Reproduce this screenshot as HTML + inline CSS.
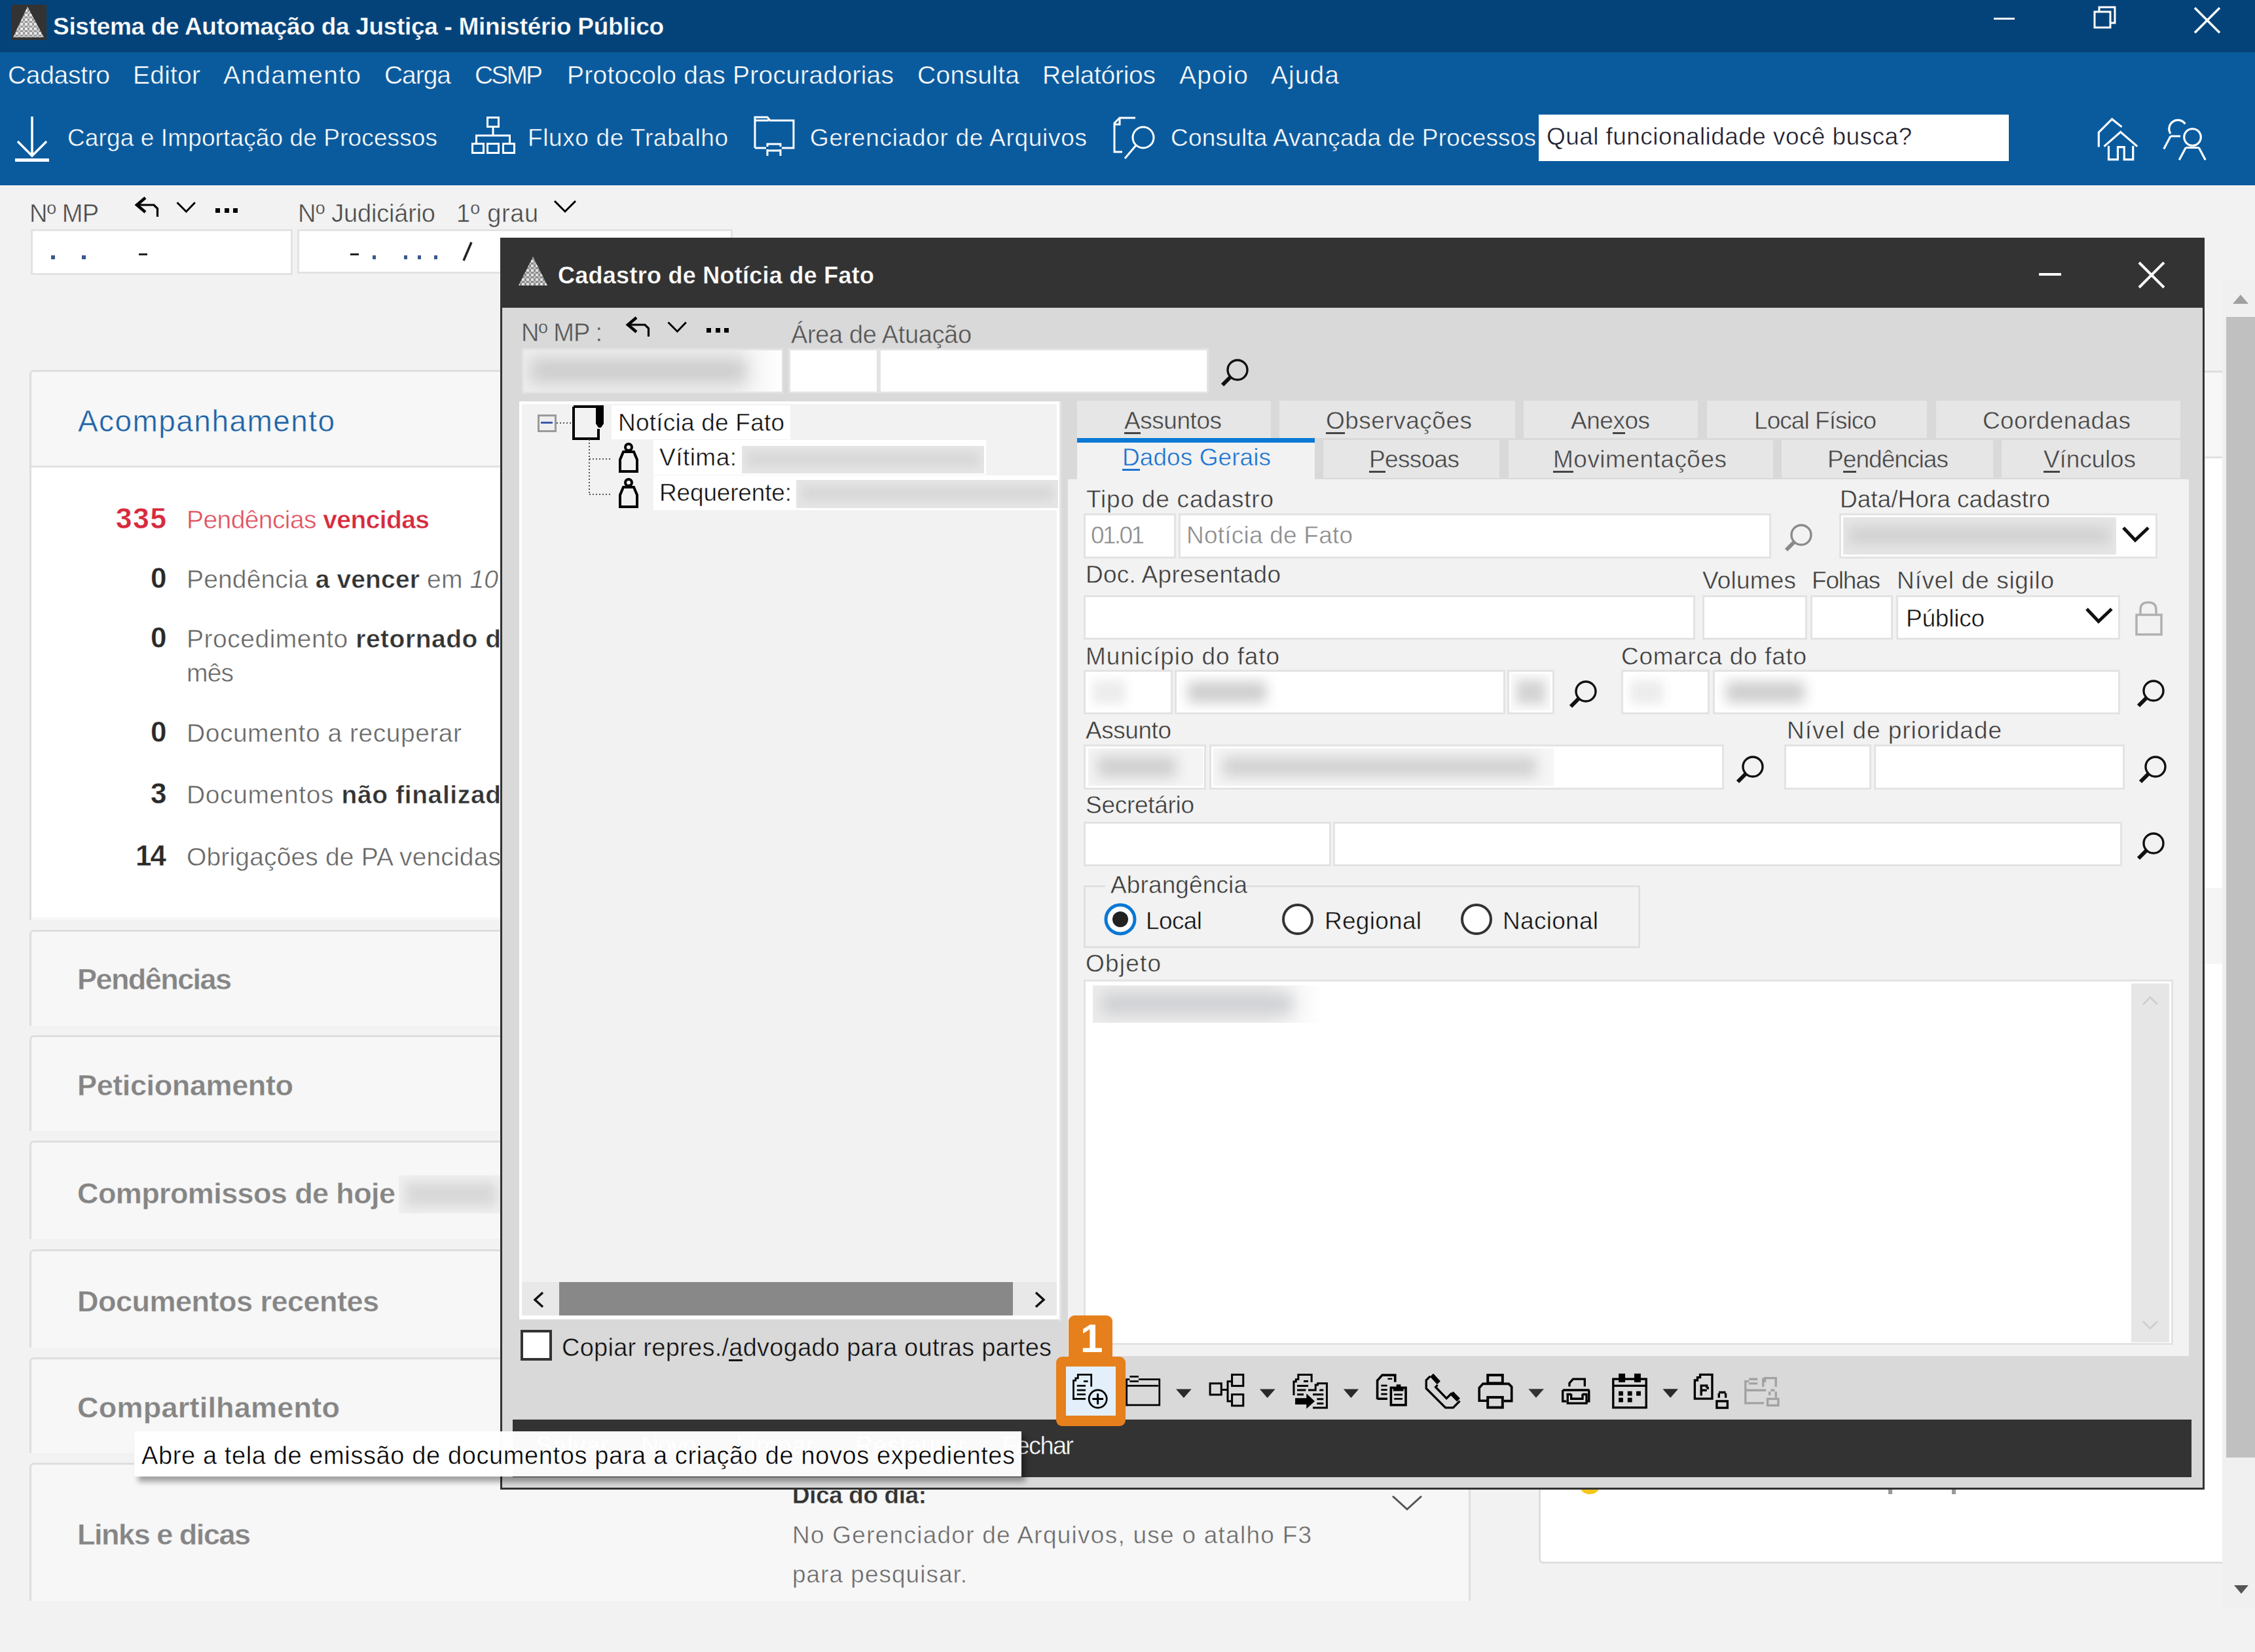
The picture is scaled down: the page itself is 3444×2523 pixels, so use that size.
<!DOCTYPE html><html><head><meta charset="utf-8"><style>
html,body{margin:0;padding:0;width:3444px;height:2523px;overflow:hidden;background:#f2f2f2;}
body{position:relative;font-family:"Liberation Sans",sans-serif;}
.a{position:absolute;}
.t{white-space:pre;}
</style></head><body>
<div class="a" style="left:0px;top:0px;width:3444px;height:80px;background:#04437a;"></div>
<div class="a" style="left:0px;top:80px;width:3444px;height:203px;background:#0a5b9e;"></div>
<div class="a" style="left:17px;top:7px;width:54px;height:54px;background:#333;"></div>
<svg class="a" style="left:17px;top:7px;" width="54" height="53" viewBox="0 0 54 53"><defs><pattern id="pt1" width="7" height="7" patternUnits="userSpaceOnUse"><rect width="7" height="7" fill="#9a9a9a"/><rect width="4" height="4" fill="#e8e8e8"/><rect x="4" y="4" width="3" height="3" fill="#cfcfcf"/></pattern></defs><path d="M25 3 L50 50 L3 50 Z" fill="url(#pt1)"/></svg>
<div class="a t" style="left:81px;top:21.68px;font-size:37px;line-height:37px;color:#fff;font-weight:bold;letter-spacing:-0.303px;-webkit-text-stroke:0.35px #04437a;">Sistema de Automação da Justiça - Ministério Público</div>
<div class="a" style="left:3045px;top:27px;width:32px;height:3px;background:#fff;"></div>
<svg class="a" style="left:3195px;top:8px;" width="42" height="40" viewBox="0 0 42 40"><rect x="4" y="10" width="24" height="24" fill="none" stroke="#fff" stroke-width="3"/><path d="M11 10 V3 H35 V27 H28" fill="none" stroke="#fff" stroke-width="3"/></svg>
<svg class="a" style="left:3349px;top:9px;" width="44" height="44" viewBox="0 0 44 44"><path d="M3 3 L41 41 M41 3 L3 41" stroke="#fff" stroke-width="3.5"/></svg>
<div class="a t" style="left:12px;top:94.99px;font-size:39px;line-height:39px;color:#fff;letter-spacing:-0.319px;-webkit-text-stroke:0.50px #0a5b9e;">Cadastro</div>
<div class="a t" style="left:203px;top:94.99px;font-size:39px;line-height:39px;color:#fff;letter-spacing:0.225px;-webkit-text-stroke:0.50px #0a5b9e;">Editor</div>
<div class="a t" style="left:341px;top:94.99px;font-size:39px;line-height:39px;color:#fff;letter-spacing:1.317px;-webkit-text-stroke:0.50px #0a5b9e;">Andamento</div>
<div class="a t" style="left:587px;top:94.99px;font-size:39px;line-height:39px;color:#fff;letter-spacing:-1.054px;-webkit-text-stroke:0.50px #0a5b9e;">Carga</div>
<div class="a t" style="left:725px;top:94.99px;font-size:39px;line-height:39px;color:#fff;letter-spacing:-2.893px;-webkit-text-stroke:0.50px #0a5b9e;">CSMP</div>
<div class="a t" style="left:866px;top:94.99px;font-size:39px;line-height:39px;color:#fff;letter-spacing:0.267px;-webkit-text-stroke:0.50px #0a5b9e;">Protocolo das Procuradorias</div>
<div class="a t" style="left:1401px;top:94.99px;font-size:39px;line-height:39px;color:#fff;letter-spacing:0.298px;-webkit-text-stroke:0.50px #0a5b9e;">Consulta</div>
<div class="a t" style="left:1592px;top:94.99px;font-size:39px;line-height:39px;color:#fff;letter-spacing:-0.285px;-webkit-text-stroke:0.50px #0a5b9e;">Relatórios</div>
<div class="a t" style="left:1801px;top:94.99px;font-size:39px;line-height:39px;color:#fff;letter-spacing:1.314px;-webkit-text-stroke:0.50px #0a5b9e;">Apoio</div>
<div class="a t" style="left:1941px;top:94.99px;font-size:39px;line-height:39px;color:#fff;letter-spacing:1.064px;-webkit-text-stroke:0.50px #0a5b9e;">Ajuda</div>
<svg class="a" style="left:22px;top:176px;" width="54" height="72" viewBox="0 0 54 72"><path d="M27 2 V62 M5 40 L27 62 L49 40" fill="none" stroke="#fff" stroke-width="3.5"/><rect x="1" y="66" width="52" height="5" fill="#fff"/></svg>
<div class="a t" style="left:103px;top:191.68px;font-size:37px;line-height:37px;color:#fff;letter-spacing:0.120px;-webkit-text-stroke:0.50px #0a5b9e;">Carga e Importação de Processos</div>
<svg class="a" style="left:718px;top:176px;" width="72" height="64" viewBox="0 0 72 64"><g fill="none" stroke="#fff" stroke-width="3"><rect x="26.5" y="3.5" width="17" height="14"/><path d="M35 17 V31 M9.5 31 H60.5 M9.5 29.5 V42 M60.5 29.5 V42"/><rect x="3.5" y="43.5" width="17" height="14"/><rect x="26.5" y="43.5" width="17" height="14"/><rect x="50.5" y="43.5" width="17" height="14"/></g></svg>
<div class="a t" style="left:806px;top:191.68px;font-size:37px;line-height:37px;color:#fff;letter-spacing:0.615px;-webkit-text-stroke:0.50px #0a5b9e;">Fluxo de Trabalho</div>
<svg class="a" style="left:1150px;top:176px;" width="66" height="66" viewBox="0 0 66 66"><g fill="none" stroke="#fff" stroke-width="3"><path d="M3 50 V3 H22 L26 8 H62 V50 H3 M3 8 H24"/><path d="M22 62 V44 H42 V62 M22 54 H42" /></g><rect x="20" y="48" width="24" height="4" fill="#0a5b9e"/><path d="M22 62 V44 H42 V62" fill="none" stroke="#fff" stroke-width="3" transform="translate(1150 176)"/></svg>
<div class="a t" style="left:1237px;top:191.68px;font-size:37px;line-height:37px;color:#fff;letter-spacing:0.718px;-webkit-text-stroke:0.50px #0a5b9e;">Gerenciador de Arquivos</div>
<svg class="a" style="left:1698px;top:176px;" width="76" height="70" viewBox="0 0 76 70"><g fill="none" stroke="#fff" stroke-width="3"><path d="M16 56 H4 V12 L12 4 H36"/><path d="M4 14 H12 V4"/><circle cx="48" cy="34" r="16"/><path d="M37 46 L20 66"/></g></svg>
<div class="a t" style="left:1788px;top:191.68px;font-size:37px;line-height:37px;color:#fff;letter-spacing:0.187px;-webkit-text-stroke:0.50px #0a5b9e;">Consulta Avançada de Processos</div>
<div class="a" style="left:2350px;top:175px;width:718px;height:71px;background:#fff;"></div>
<div class="a t" style="left:2362px;top:189.68px;font-size:37px;line-height:37px;color:#1a1a2a;letter-spacing:0.431px;-webkit-text-stroke:0.50px #ffffff;">Qual funcionalidade você busca?</div>
<svg class="a" style="left:3180px;top:165px;" width="210" height="95" viewBox="0 0 210 95"><g transform="scale(0.09311)" fill="none" stroke="#fff" stroke-width="34"><path d="M272 640 V400 L490 182 L650 310"/><path d="M360 630 L630 392 L905 630"/><path d="M435 620 V845 H585 V640 H690 V845 H835 V620"/><path d="M1690 262 A135 135 0 1 0 1450 420"/><path d="M1450 462 H1612 M1450 462 L1340 672"/><circle cx="1810" cy="478" r="137"/><path d="M1700 650 H1915 M1700 650 L1592 850 M1915 650 L2022 850"/></g></svg>
<div class="a t" style="left:45px;top:306.83px;font-size:38px;line-height:38px;color:#4a4a4a;letter-spacing:-0.720px;-webkit-text-stroke:0.50px #f2f2f2;">Nº MP</div>
<svg class="a" style="left:200px;top:297px;" width="50" height="40" viewBox="0 0 50 40"><g fill="none" stroke="#000"><path d="M22 5 L9 16 L22 27" stroke-width="4.5"/><path d="M9 16 H35 L40.5 21.5 V34" stroke-width="3.2"/></g></svg>
<svg class="a" style="left:265px;top:305px;" width="38" height="24" viewBox="0 0 38 24"><path d="M5.5 4.3 L19.4 18.2 L32.8 4.3" fill="none" stroke="#000" stroke-width="3"/></svg>
<div class="a" style="left:329px;top:318px;width:7px;height:7px;background:#000;"></div>
<div class="a" style="left:343px;top:318px;width:7px;height:7px;background:#000;"></div>
<div class="a" style="left:356px;top:318px;width:7px;height:7px;background:#000;"></div>
<div class="a t" style="left:455px;top:306.83px;font-size:38px;line-height:38px;color:#4a4a4a;letter-spacing:-0.199px;-webkit-text-stroke:0.50px #f2f2f2;">Nº Judiciário</div>
<div class="a t" style="left:697px;top:306.83px;font-size:38px;line-height:38px;color:#4a4a4a;letter-spacing:0.564px;-webkit-text-stroke:0.50px #f2f2f2;">1º grau</div>
<svg class="a" style="left:845px;top:304px;" width="36" height="22" viewBox="0 0 36 22"><path d="M2 3 L18 19 L34 3" fill="none" stroke="#000" stroke-width="3"/></svg>
<div class="a" style="left:47px;top:350px;width:394px;height:64px;background:#fff;border:3px solid #e3e3e3;"></div>
<div class="a" style="left:454px;top:350px;width:659px;height:62px;background:#fff;border:3px solid #e3e3e3;"></div>
<div class="a" style="left:78px;top:390px;width:6px;height:6px;background:#3a5a8a;"></div>
<div class="a" style="left:125px;top:390px;width:6px;height:6px;background:#3a5a8a;"></div>
<div class="a" style="left:212px;top:387px;width:13px;height:3px;background:#222;"></div>
<div class="a" style="left:535px;top:387px;width:13px;height:3px;background:#222;"></div>
<div class="a" style="left:569px;top:390px;width:5px;height:6px;background:#3a5a8a;"></div>
<div class="a" style="left:617px;top:390px;width:5px;height:6px;background:#3a5a8a;"></div>
<div class="a" style="left:638px;top:390px;width:5px;height:6px;background:#3a5a8a;"></div>
<div class="a" style="left:663px;top:390px;width:5px;height:6px;background:#3a5a8a;"></div>
<svg class="a" style="left:704px;top:368px;" width="20" height="32" viewBox="0 0 20 32"><path d="M16 2 L4 30" stroke="#222" stroke-width="3.5"/></svg>
<div class="a" style="left:45px;top:565px;width:2195px;height:837px;background:#f7f7f7;border:3px solid #dedede;border-bottom:none;border-radius:7px 7px 0 0;"></div>
<div class="a" style="left:48px;top:714px;width:2195px;height:687px;background:#fff;"></div>
<div class="a" style="left:48px;top:711px;width:2195px;height:3px;background:#e2e2e2;"></div>
<div class="a t" style="left:119px;top:620.06px;font-size:46px;line-height:46px;color:#1f64a6;letter-spacing:1.437px;-webkit-text-stroke:0.50px #f7f7f7;">Acompanhamento</div>
<div class="a t" style="left:177px;top:769.75px;font-size:44px;line-height:44px;color:#d62a3d;font-weight:bold;letter-spacing:1.798px;-webkit-text-stroke:0.35px #ffffff;">335</div>
<div class="a t" style="left:285px;top:773.99px;font-size:39px;line-height:39px;letter-spacing:-0.586px;-webkit-text-stroke:0.50px #ffffff;"><span style="color:#e0505e;">Pendências </span><span style="color:#d62a3d;font-weight:bold;">vencidas</span></div>
<div class="a t" style="left:230px;top:860.75px;font-size:44px;line-height:44px;color:#2a2a2a;font-weight:bold;-webkit-text-stroke:0.35px #ffffff;">0</div>
<div class="a t" style="left:285px;top:864.99px;font-size:39px;line-height:39px;letter-spacing:0.146px;-webkit-text-stroke:0.50px #ffffff;"><span style="color:#666;">Pendência </span><span style="color:#333;font-weight:bold;">a vencer</span><span style="color:#666;"> em </span><span style="color:#666;font-style:italic;">10</span></div>
<div class="a t" style="left:230px;top:951.75px;font-size:44px;line-height:44px;color:#2a2a2a;font-weight:bold;-webkit-text-stroke:0.35px #ffffff;">0</div>
<div class="a t" style="left:285px;top:955.99px;font-size:39px;line-height:39px;letter-spacing:0.517px;-webkit-text-stroke:0.50px #ffffff;"><span style="color:#666;">Procedimento </span><span style="color:#333;font-weight:bold;">retornado d</span></div>
<div class="a t" style="left:285px;top:1007.99px;font-size:39px;line-height:39px;color:#666;letter-spacing:-0.837px;-webkit-text-stroke:0.50px #ffffff;">mês</div>
<div class="a t" style="left:230px;top:1095.75px;font-size:44px;line-height:44px;color:#2a2a2a;font-weight:bold;-webkit-text-stroke:0.35px #ffffff;">0</div>
<div class="a t" style="left:285px;top:1099.99px;font-size:39px;line-height:39px;color:#666;letter-spacing:0.516px;-webkit-text-stroke:0.50px #ffffff;">Documento a recuperar</div>
<div class="a t" style="left:230px;top:1189.75px;font-size:44px;line-height:44px;color:#2a2a2a;font-weight:bold;-webkit-text-stroke:0.35px #ffffff;">3</div>
<div class="a t" style="left:285px;top:1193.99px;font-size:39px;line-height:39px;letter-spacing:0.612px;-webkit-text-stroke:0.50px #ffffff;"><span style="color:#666;">Documentos </span><span style="color:#333;font-weight:bold;">não finalizad</span></div>
<div class="a t" style="left:207px;top:1284.75px;font-size:44px;line-height:44px;color:#2a2a2a;font-weight:bold;letter-spacing:-1.936px;-webkit-text-stroke:0.35px #ffffff;">14</div>
<div class="a t" style="left:285px;top:1288.99px;font-size:39px;line-height:39px;color:#666;letter-spacing:0.158px;-webkit-text-stroke:0.50px #ffffff;">Obrigações de PA vencidas</div>
<div class="a" style="left:45px;top:1420px;width:2195px;height:144px;background:#f7f7f7;border:3px solid #dedede;border-bottom:none;border-radius:7px 7px 0 0;"></div>
<div class="a t" style="left:118px;top:1472.91px;font-size:45px;line-height:45px;color:#858585;font-weight:bold;letter-spacing:-1.566px;-webkit-text-stroke:0.35px #f7f7f7;">Pendências</div>
<div class="a" style="left:45px;top:1581px;width:2195px;height:143px;background:#f7f7f7;border:3px solid #dedede;border-bottom:none;border-radius:7px 7px 0 0;"></div>
<div class="a t" style="left:118px;top:1634.91px;font-size:45px;line-height:45px;color:#858585;font-weight:bold;letter-spacing:-0.388px;-webkit-text-stroke:0.35px #f7f7f7;">Peticionamento</div>
<div class="a" style="left:45px;top:1742px;width:2195px;height:147px;background:#f7f7f7;border:3px solid #dedede;border-bottom:none;border-radius:7px 7px 0 0;"></div>
<div class="a t" style="left:118px;top:1799.91px;font-size:45px;line-height:45px;color:#858585;font-weight:bold;letter-spacing:-0.609px;-webkit-text-stroke:0.35px #f7f7f7;">Compromissos de hoje</div>
<div class="a" style="left:45px;top:1908px;width:2195px;height:147px;background:#f7f7f7;border:3px solid #dedede;border-bottom:none;border-radius:7px 7px 0 0;"></div>
<div class="a t" style="left:118px;top:1964.91px;font-size:45px;line-height:45px;color:#858585;font-weight:bold;letter-spacing:-0.506px;-webkit-text-stroke:0.35px #f7f7f7;">Documentos recentes</div>
<div class="a" style="left:45px;top:2073px;width:2195px;height:143px;background:#f7f7f7;border:3px solid #dedede;border-bottom:none;border-radius:7px 7px 0 0;"></div>
<div class="a t" style="left:118px;top:2126.91px;font-size:45px;line-height:45px;color:#858585;font-weight:bold;letter-spacing:0.233px;-webkit-text-stroke:0.35px #f7f7f7;">Compartilhamento</div>
<div class="a" style="left:45px;top:2234px;width:2195px;height:208px;background:#f7f7f7;border:3px solid #dedede;border-bottom:none;border-radius:7px 7px 0 0;"></div>
<div class="a t" style="left:118px;top:2320.91px;font-size:45px;line-height:45px;color:#858585;font-weight:bold;letter-spacing:-1.467px;-webkit-text-stroke:0.35px #f7f7f7;">Links e dicas</div>
<div class="a" style="left:609px;top:1795px;width:155px;height:58px;background:#f0f0f0;overflow:hidden;"><div class="a" style="left:10px;top:10px;width:140px;height:38px;background:#d8d8d8;filter:blur(9px);"></div></div>
<div class="a t" style="left:1210px;top:2264.68px;font-size:37px;line-height:37px;color:#333;font-weight:bold;letter-spacing:-0.425px;-webkit-text-stroke:0.35px #f7f7f7;">Dica do dia:</div>
<svg class="a" style="left:2124px;top:2282px;" width="50" height="26" viewBox="0 0 50 26"><path d="M3 3 L25 23 L47 3" fill="none" stroke="#555" stroke-width="3"/></svg>
<div class="a t" style="left:1210px;top:2325.68px;font-size:37px;line-height:37px;color:#6a6a6a;letter-spacing:1.253px;-webkit-text-stroke:0.50px #f7f7f7;">No Gerenciador de Arquivos, use o atalho F3</div>
<div class="a t" style="left:1210px;top:2385.68px;font-size:37px;line-height:37px;color:#6a6a6a;letter-spacing:1.001px;-webkit-text-stroke:0.50px #f7f7f7;">para pesquisar.</div>
<div class="a" style="left:2350px;top:566px;width:1044px;height:1816px;background:#fff;border:3px solid #dedede;border-radius:7px;"></div>
<div class="a" style="left:2353px;top:569px;width:1044px;height:128px;background:#f7f7f7;"></div>
<div class="a" style="left:2353px;top:697px;width:1044px;height:3px;background:#e2e2e2;"></div>
<div class="a" style="left:3367px;top:1356px;width:27px;height:116px;background:#f5f5f5;"></div>
<div class="a" style="left:3394px;top:427px;width:50px;height:2030px;background:#f0f0f0;"></div>
<div class="a" style="left:3400px;top:484px;width:44px;height:1742px;background:#c0c0c0;"></div>
<svg class="a" style="left:3408px;top:448px;" width="28" height="18" viewBox="0 0 28 18"><path d="M14 2 L26 16 L2 16 Z" fill="#a0a0a0"/></svg>
<svg class="a" style="left:3410px;top:2419px;" width="26" height="18" viewBox="0 0 26 18"><path d="M2 2 L24 2 L13 15 Z" fill="#555"/></svg>
<svg class="a" style="left:2413px;top:2268px;" width="30" height="16" viewBox="0 0 30 16"><ellipse cx="15" cy="4" rx="14" ry="10" fill="#f5c518"/></svg>
<div class="a" style="left:2884px;top:2275px;width:6px;height:7px;background:#999;"></div>
<div class="a" style="left:2981px;top:2275px;width:6px;height:7px;background:#999;"></div>
<div class="a" style="left:764px;top:363px;width:2603px;height:1912px;background:#333;"></div>
<div class="a" style="left:767px;top:470px;width:2597px;height:1802px;background:#d9d9d9;"></div>
<svg class="a" style="left:790px;top:390px;" width="48" height="48" viewBox="0 0 48 48"><defs><pattern id="pt2" width="7" height="7" patternUnits="userSpaceOnUse"><rect width="7" height="7" fill="#8a8a8a"/><rect width="4" height="4" fill="#e0e0e0"/><rect x="4" y="4" width="3" height="3" fill="#c4c4c4"/></pattern></defs><path d="M24 2 L46 46 L2 46 Z" fill="url(#pt2)"/></svg>
<div class="a t" style="left:852px;top:402.53px;font-size:36px;line-height:36px;color:#fff;font-weight:bold;letter-spacing:0.267px;-webkit-text-stroke:0.35px #333333;">Cadastro de Notícia de Fato</div>
<div class="a" style="left:3114px;top:417px;width:34px;height:4px;background:#fff;"></div>
<svg class="a" style="left:3264px;top:398px;" width="44" height="44" viewBox="0 0 44 44"><path d="M3 3 L41 41 M41 3 L3 41" stroke="#fff" stroke-width="4"/></svg>
<div class="a t" style="left:796px;top:488.83px;font-size:38px;line-height:38px;color:#555;letter-spacing:-0.884px;-webkit-text-stroke:0.50px #d9d9d9;">Nº MP :</div>
<svg class="a" style="left:950px;top:480px;" width="50" height="40" viewBox="0 0 50 40"><g fill="none" stroke="#000"><path d="M22 5 L9 16 L22 27" stroke-width="4.5"/><path d="M9 16 H35 L40.5 21.5 V34" stroke-width="3.2"/></g></svg>
<svg class="a" style="left:1015px;top:488px;" width="38" height="24" viewBox="0 0 38 24"><path d="M5.5 4.3 L19.4 18.2 L32.8 4.3" fill="none" stroke="#000" stroke-width="3"/></svg>
<div class="a" style="left:1079px;top:501px;width:7px;height:7px;background:#000;"></div>
<div class="a" style="left:1093px;top:501px;width:7px;height:7px;background:#000;"></div>
<div class="a" style="left:1106px;top:501px;width:7px;height:7px;background:#000;"></div>
<div class="a t" style="left:1208px;top:491.83px;font-size:38px;line-height:38px;color:#555;letter-spacing:-0.355px;-webkit-text-stroke:0.50px #d9d9d9;">Área de Atuação</div>
<div class="a" style="left:797px;top:532px;width:393px;height:63px;background:#fff;border:3px solid #e3e3e3;"></div>
<div class="a" style="left:800px;top:535px;width:394px;height:63px;background:linear-gradient(to right,#eeeeee 80%,#ffffff);overflow:hidden;"><div class="a" style="left:10px;top:12px;width:330px;height:38px;background:#cdcdcd;filter:blur(12px);"></div></div>
<div class="a" style="left:1204px;top:532px;width:132px;height:63px;background:#fff;border:3px solid #e3e3e3;"></div>
<div class="a" style="left:1342px;top:532px;width:498px;height:63px;background:#fff;border:3px solid #e3e3e3;"></div>
<div class="a" style="left:793px;top:613px;width:817px;height:1392px;background:#f2f2f2;border:4px solid #fff;border-bottom-width:6px;"></div>
<div class="a" style="left:1618px;top:613px;width:3px;height:1406px;background:#e4e4e4;"></div>
<div class="a" style="left:821px;top:633px;width:23px;height:21px;border:3px solid #9a9a9a;background:#eee;"></div>
<div class="a" style="left:826px;top:644px;width:18px;height:3px;background:#3b5bb0;"></div>
<svg class="a" style="left:850px;top:644px;" width="24" height="4" viewBox="0 0 24 4"><path d="M0 2 H24" stroke="#555" stroke-width="2" stroke-dasharray="2 3"/></svg>
<div class="a" style="left:934px;top:619px;width:273px;height:52px;background:#fff;"></div>
<svg class="a" style="left:874px;top:619px;" width="48" height="53" viewBox="0 0 48 53"><path d="M2 2 H36 M2 2 V51 H40 V36" fill="none" stroke="#000" stroke-width="4"/><path d="M36 0 H48 V28 L44 34 H40 L36 28 Z" fill="#000"/></svg>
<div class="a t" style="left:944px;top:626.68px;font-size:37px;line-height:37px;color:#111;letter-spacing:0.222px;-webkit-text-stroke:0.50px #ffffff;">Notícia de Fato</div>
<svg class="a" style="left:898px;top:671px;" width="40" height="90" viewBox="0 0 40 90"><path d="M2 0 V84 M2 30 H36 M2 84 H36" fill="none" stroke="#555" stroke-width="2" stroke-dasharray="2 3"/></svg>
<div class="a" style="left:998px;top:672px;width:508px;height:53px;background:#fff;"></div>
<div class="a" style="left:998px;top:726px;width:618px;height:53px;background:#fff;"></div>
<svg class="a" style="left:944px;top:676px;" width="32" height="46" viewBox="0 0 32 46"><g fill="none" stroke="#000" stroke-width="4"><circle cx="16" cy="7" r="5"/><path d="M8 14 H24 L29 26 V44 H3 V26 Z"/></g></svg>
<svg class="a" style="left:944px;top:730px;" width="32" height="46" viewBox="0 0 32 46"><g fill="none" stroke="#000" stroke-width="4"><circle cx="16" cy="7" r="5"/><path d="M8 14 H24 L29 26 V44 H3 V26 Z"/></g></svg>
<div class="a t" style="left:1007px;top:679.68px;font-size:37px;line-height:37px;color:#111;letter-spacing:0.478px;-webkit-text-stroke:0.50px #ffffff;">Vítima:</div>
<div class="a t" style="left:1007px;top:733.68px;font-size:37px;line-height:37px;color:#111;letter-spacing:-0.163px;-webkit-text-stroke:0.50px #ffffff;">Requerente:</div>
<div class="a" style="left:1133px;top:681px;width:370px;height:42px;background:#e6e6e6;overflow:hidden;"><div class="a" style="left:8px;top:10px;width:354px;height:21px;background:#d6d6d6;filter:blur(8px);"></div></div>
<div class="a" style="left:1216px;top:733px;width:400px;height:43px;background:#e6e6e6;overflow:hidden;"><div class="a" style="left:8px;top:10px;width:384px;height:21px;background:#d6d6d6;filter:blur(8px);"></div></div>
<div class="a" style="left:797px;top:1958px;width:817px;height:51px;background:#e8e8e8;"></div>
<div class="a" style="left:854px;top:1958px;width:693px;height:51px;background:#888;"></div>
<svg class="a" style="left:814px;top:1972px;" width="18" height="26" viewBox="0 0 18 26"><path d="M15 2 L3 13 L15 24" fill="none" stroke="#111" stroke-width="3.5"/></svg>
<svg class="a" style="left:1579px;top:1972px;" width="18" height="26" viewBox="0 0 18 26"><path d="M3 2 L15 13 L3 24" fill="none" stroke="#111" stroke-width="3.5"/></svg>
<div class="a" style="left:795px;top:2031px;width:40px;height:39px;border:4px solid #333;background:#fff;"></div>
<div class="a" style="left:1113.3px;top:2076px;width:21.1px;height:3px;background:#111;"></div>
<div class="a t" style="left:858px;top:2038.83px;font-size:38px;line-height:38px;color:#111;letter-spacing:0.265px;-webkit-text-stroke:0.50px #d9d9d9;">Copiar repres./advogado para outras partes</div>
<div class="a" style="left:1645px;top:612px;width:296px;height:57px;background:#e6e6e6;"></div>
<div class="a" style="left:1717.0px;top:660px;width:24.7px;height:3px;background:#444;"></div>
<div class="a t" style="left:1717px;top:623.68px;font-size:37px;line-height:37px;color:#444;letter-spacing:-0.455px;-webkit-text-stroke:0.50px #e6e6e6;">Assuntos</div>
<div class="a" style="left:1954px;top:612px;width:360px;height:57px;background:#e6e6e6;"></div>
<div class="a" style="left:2025.0px;top:660px;width:28.8px;height:3px;background:#444;"></div>
<div class="a t" style="left:2025px;top:623.68px;font-size:37px;line-height:37px;color:#444;letter-spacing:0.502px;-webkit-text-stroke:0.50px #e6e6e6;">Observações</div>
<div class="a" style="left:2327px;top:612px;width:266px;height:57px;background:#e6e6e6;"></div>
<div class="a" style="left:2463.4px;top:660px;width:18.5px;height:3px;background:#444;"></div>
<div class="a t" style="left:2399px;top:623.68px;font-size:37px;line-height:37px;color:#444;letter-spacing:-0.481px;-webkit-text-stroke:0.50px #e6e6e6;">Anexos</div>
<div class="a" style="left:2607px;top:612px;width:336px;height:57px;background:#e6e6e6;"></div>
<div class="a t" style="left:2679px;top:623.68px;font-size:37px;line-height:37px;color:#444;letter-spacing:-0.946px;-webkit-text-stroke:0.50px #e6e6e6;">Local Físico</div>
<div class="a" style="left:2957px;top:612px;width:373px;height:57px;background:#e6e6e6;"></div>
<div class="a t" style="left:3028px;top:623.68px;font-size:37px;line-height:37px;color:#444;letter-spacing:0.386px;-webkit-text-stroke:0.50px #e6e6e6;">Coordenadas</div>
<div class="a" style="left:2021px;top:672px;width:269px;height:58px;background:#e6e6e6;"></div>
<div class="a" style="left:2091.0px;top:719px;width:24.7px;height:3px;background:#444;"></div>
<div class="a t" style="left:2091px;top:682.68px;font-size:37px;line-height:37px;color:#444;letter-spacing:-0.651px;-webkit-text-stroke:0.50px #e6e6e6;">Pessoas</div>
<div class="a" style="left:2304px;top:672px;width:404px;height:58px;background:#e6e6e6;"></div>
<div class="a" style="left:2372.0px;top:719px;width:30.8px;height:3px;background:#444;"></div>
<div class="a t" style="left:2372px;top:682.68px;font-size:37px;line-height:37px;color:#444;letter-spacing:0.492px;-webkit-text-stroke:0.50px #e6e6e6;">Movimentações</div>
<div class="a" style="left:2721px;top:672px;width:323px;height:58px;background:#e6e6e6;"></div>
<div class="a" style="left:2814.8px;top:719px;width:20.6px;height:3px;background:#444;"></div>
<div class="a t" style="left:2791px;top:682.68px;font-size:37px;line-height:37px;color:#444;letter-spacing:-0.928px;-webkit-text-stroke:0.50px #e6e6e6;">Pendências</div>
<div class="a" style="left:3057px;top:672px;width:273px;height:58px;background:#e6e6e6;"></div>
<div class="a" style="left:3121.0px;top:719px;width:24.7px;height:3px;background:#444;"></div>
<div class="a t" style="left:3121px;top:682.68px;font-size:37px;line-height:37px;color:#444;letter-spacing:-0.130px;-webkit-text-stroke:0.50px #e6e6e6;">Vínculos</div>
<div class="a" style="left:1645px;top:669px;width:363px;height:7px;background:#0a78d4;"></div>
<div class="a" style="left:1645px;top:676px;width:363px;height:56px;background:#f2f2f2;"></div>
<div class="a" style="left:1714.0px;top:716px;width:26.7px;height:3px;background:#1a73d0;"></div>
<div class="a t" style="left:1714px;top:679.68px;font-size:37px;line-height:37px;color:#1a73d0;letter-spacing:0.073px;-webkit-text-stroke:0.50px #f2f2f2;">Dados Gerais</div>
<div class="a" style="left:1631px;top:732px;width:1712px;height:1339px;background:#f2f2f2;"></div>
<div class="a t" style="left:1659px;top:743.68px;font-size:37px;line-height:37px;color:#3c3c3c;letter-spacing:0.786px;-webkit-text-stroke:0.50px #f2f2f2;">Tipo de cadastro</div>
<div class="a" style="left:1655px;top:784px;width:135px;height:63px;background:#fff;border:3px solid #e3e3e3;"></div>
<div class="a" style="left:1800px;top:784px;width:899px;height:63px;background:#fff;border:3px solid #e3e3e3;"></div>
<div class="a t" style="left:1666px;top:798.68px;font-size:37px;line-height:37px;color:#8a8a8a;letter-spacing:-2.645px;-webkit-text-stroke:0.50px #ffffff;">01.01</div>
<div class="a t" style="left:1812px;top:798.68px;font-size:37px;line-height:37px;color:#8a8a8a;letter-spacing:0.222px;-webkit-text-stroke:0.50px #ffffff;">Notícia de Fato</div>
<div class="a t" style="left:2810px;top:743.68px;font-size:37px;line-height:37px;color:#3c3c3c;letter-spacing:0.012px;-webkit-text-stroke:0.50px #f2f2f2;">Data/Hora cadastro</div>
<div class="a" style="left:2809px;top:784px;width:480px;height:63px;background:#fff;border:3px solid #e3e3e3;"></div>
<div class="a" style="left:2815px;top:790px;width:417px;height:57px;background:#e6e6e6;overflow:hidden;"><div class="a" style="left:9px;top:14px;width:399px;height:28px;background:#d2d2d2;filter:blur(9px);"></div></div>
<svg class="a" style="left:3240px;top:801px;" width="46" height="30" viewBox="0 0 46 30"><path d="M3 5 L21 24 L41 5" fill="none" stroke="#111" stroke-width="5"/></svg>
<div class="a t" style="left:1658px;top:858.68px;font-size:37px;line-height:37px;color:#3c3c3c;letter-spacing:0.259px;-webkit-text-stroke:0.50px #f2f2f2;">Doc. Apresentado</div>
<div class="a" style="left:1655px;top:909px;width:928px;height:62px;background:#fff;border:3px solid #e3e3e3;"></div>
<div class="a t" style="left:2600px;top:867.68px;font-size:37px;line-height:37px;color:#3c3c3c;letter-spacing:0.182px;-webkit-text-stroke:0.50px #f2f2f2;">Volumes</div>
<div class="a t" style="left:2767px;top:867.68px;font-size:37px;line-height:37px;color:#3c3c3c;letter-spacing:-1.209px;-webkit-text-stroke:0.50px #f2f2f2;">Folhas</div>
<div class="a t" style="left:2897px;top:867.68px;font-size:37px;line-height:37px;color:#3c3c3c;letter-spacing:0.691px;-webkit-text-stroke:0.50px #f2f2f2;">Nível de sigilo</div>
<div class="a" style="left:2600px;top:909px;width:154px;height:62px;background:#fff;border:3px solid #e3e3e3;"></div>
<div class="a" style="left:2765px;top:909px;width:120px;height:62px;background:#fff;border:3px solid #e3e3e3;"></div>
<div class="a" style="left:2896px;top:909px;width:336px;height:62px;background:#fff;border:3px solid #e3e3e3;"></div>
<div class="a t" style="left:2911px;top:925.68px;font-size:37px;line-height:37px;color:#111;letter-spacing:-0.225px;-webkit-text-stroke:0.50px #ffffff;">Público</div>
<svg class="a" style="left:3184px;top:925px;" width="46" height="30" viewBox="0 0 46 30"><path d="M3 5 L21 24 L41 5" fill="none" stroke="#111" stroke-width="5"/></svg>
<svg class="a" style="left:3260px;top:917px;" width="46" height="56" viewBox="0 0 46 56"><g fill="none" stroke="#b0b0b0" stroke-width="3.5"><path d="M9 22 V14 Q9 3 21 3 Q33 3 33 14 V22"/><rect x="3" y="22" width="38" height="30"/></g></svg>
<div class="a t" style="left:1658px;top:983.68px;font-size:37px;line-height:37px;color:#3c3c3c;letter-spacing:0.890px;-webkit-text-stroke:0.50px #f2f2f2;">Município do fato</div>
<div class="a" style="left:1655px;top:1023px;width:130px;height:62px;background:#fff;border:3px solid #e3e3e3;"></div>
<div class="a" style="left:1794px;top:1023px;width:499px;height:62px;background:#fff;border:3px solid #e3e3e3;"></div>
<div class="a" style="left:2302px;top:1023px;width:66px;height:62px;background:#fff;border:3px solid #e3e3e3;"></div>
<div class="a" style="left:1661px;top:1029px;width:124px;height:56px;background:#fff;overflow:hidden;"><div class="a" style="left:8px;top:10px;width:50px;height:36px;background:#ececec;filter:blur(8px);"></div></div>
<div class="a" style="left:1800px;top:1029px;width:165px;height:56px;background:#ffffff;overflow:hidden;"><div class="a" style="left:14px;top:12px;width:120px;height:32px;background:#cdcdcd;filter:blur(10px);"></div></div>
<div class="a" style="left:2308px;top:1029px;width:60px;height:56px;background:#fafafa;overflow:hidden;"><div class="a" style="left:8px;top:10px;width:44px;height:36px;background:#d4d4d4;filter:blur(8px);"></div></div>
<div class="a t" style="left:2476px;top:983.68px;font-size:37px;line-height:37px;color:#3c3c3c;letter-spacing:0.678px;-webkit-text-stroke:0.50px #f2f2f2;">Comarca do fato</div>
<div class="a" style="left:2476px;top:1023px;width:129px;height:62px;background:#fff;border:3px solid #e3e3e3;"></div>
<div class="a" style="left:2616px;top:1023px;width:616px;height:62px;background:#fff;border:3px solid #e3e3e3;"></div>
<div class="a" style="left:2482px;top:1029px;width:123px;height:56px;background:#fff;overflow:hidden;"><div class="a" style="left:8px;top:10px;width:50px;height:36px;background:#ececec;filter:blur(8px);"></div></div>
<div class="a" style="left:2622px;top:1029px;width:165px;height:56px;background:#ffffff;overflow:hidden;"><div class="a" style="left:14px;top:12px;width:120px;height:32px;background:#cdcdcd;filter:blur(10px);"></div></div>
<div class="a t" style="left:1658px;top:1096.68px;font-size:37px;line-height:37px;color:#3c3c3c;letter-spacing:-0.448px;-webkit-text-stroke:0.50px #f2f2f2;">Assunto</div>
<div class="a" style="left:1655px;top:1137px;width:181px;height:63px;background:#fff;border:3px solid #e3e3e3;"></div>
<div class="a" style="left:1847px;top:1137px;width:780px;height:63px;background:#fff;border:3px solid #e3e3e3;"></div>
<div class="a" style="left:1662px;top:1143px;width:175px;height:57px;background:#f4f4f4;overflow:hidden;"><div class="a" style="left:14px;top:12px;width:120px;height:32px;background:#cfcfcf;filter:blur(10px);"></div></div>
<div class="a" style="left:1853px;top:1143px;width:520px;height:57px;background:#f6f6f6;overflow:hidden;"><div class="a" style="left:14px;top:12px;width:480px;height:32px;background:#d2d2d2;filter:blur(10px);"></div></div>
<div class="a t" style="left:2729px;top:1096.68px;font-size:37px;line-height:37px;color:#3c3c3c;letter-spacing:0.970px;-webkit-text-stroke:0.50px #f2f2f2;">Nível de prioridade</div>
<div class="a" style="left:2725px;top:1137px;width:127px;height:63px;background:#fff;border:3px solid #e3e3e3;"></div>
<div class="a" style="left:2862px;top:1137px;width:377px;height:63px;background:#fff;border:3px solid #e3e3e3;"></div>
<div class="a t" style="left:1658px;top:1210.68px;font-size:37px;line-height:37px;color:#3c3c3c;letter-spacing:-0.291px;-webkit-text-stroke:0.50px #f2f2f2;">Secretário</div>
<div class="a" style="left:1655px;top:1255px;width:372px;height:62px;background:#fff;border:3px solid #e3e3e3;"></div>
<div class="a" style="left:2036px;top:1255px;width:1199px;height:62px;background:#fff;border:3px solid #e3e3e3;"></div>
<div class="a" style="left:1655px;top:1352px;width:844px;height:90px;border:3px solid #e0e0e0;"></div>
<div class="a" style="left:1688px;top:1335px;width:200px;height:28px;background:#f2f2f2;"></div>
<div class="a t" style="left:1696px;top:1332.68px;font-size:37px;line-height:37px;color:#3c3c3c;letter-spacing:0.125px;-webkit-text-stroke:0.50px #f2f2f2;">Abrangência</div>
<svg class="a" style="left:1684px;top:1377px;" width="54" height="54" viewBox="0 0 54 54"><circle cx="27" cy="27" r="22" fill="#fff" stroke="#0a78d4" stroke-width="5"/><circle cx="27" cy="27" r="12" fill="#222"/></svg>
<div class="a t" style="left:1750px;top:1387.68px;font-size:37px;line-height:37px;color:#111;letter-spacing:-0.612px;-webkit-text-stroke:0.50px #f2f2f2;">Local</div>
<svg class="a" style="left:1955px;top:1377px;" width="54" height="54" viewBox="0 0 54 54"><circle cx="27" cy="27" r="22" fill="#fff" stroke="#333" stroke-width="4"/></svg>
<div class="a t" style="left:2023px;top:1387.68px;font-size:37px;line-height:37px;color:#111;letter-spacing:0.280px;-webkit-text-stroke:0.50px #f2f2f2;">Regional</div>
<svg class="a" style="left:2228px;top:1377px;" width="54" height="54" viewBox="0 0 54 54"><circle cx="27" cy="27" r="22" fill="#fff" stroke="#333" stroke-width="4"/></svg>
<div class="a t" style="left:2295px;top:1387.68px;font-size:37px;line-height:37px;color:#111;letter-spacing:0.291px;-webkit-text-stroke:0.50px #f2f2f2;">Nacional</div>
<div class="a t" style="left:1658px;top:1452.68px;font-size:37px;line-height:37px;color:#3c3c3c;letter-spacing:1.199px;-webkit-text-stroke:0.50px #f2f2f2;">Objeto</div>
<div class="a" style="left:1655px;top:1496px;width:1658px;height:552px;background:#fff;border:3px solid #e3e3e3;"></div>
<div class="a" style="left:1669px;top:1505px;width:350px;height:57px;background:linear-gradient(to right,#ececec 75%,#ffffff);overflow:hidden;"><div class="a" style="left:14px;top:12px;width:290px;height:32px;background:#cfd0d3;filter:blur(11px);"></div></div>
<div class="a" style="left:3255px;top:1502px;width:58px;height:548px;background:#e6e6e6;"></div>
<svg class="a" style="left:3270px;top:1520px;" width="28" height="16" viewBox="0 0 28 16"><path d="M3 14 L14 3 L25 14" fill="none" stroke="#cfcfcf" stroke-width="3"/></svg>
<svg class="a" style="left:3270px;top:2016px;" width="28" height="16" viewBox="0 0 28 16"><path d="M3 2 L14 13 L25 2" fill="none" stroke="#cfcfcf" stroke-width="3"/></svg>
<svg class="a" style="left:1860px;top:545px;" width="50" height="50" viewBox="0 0 50 50"><g fill="none" stroke="#111"><circle cx="30" cy="20" r="15" stroke-width="3.4"/><path d="M19 31 L7 43" stroke-width="6"/></g></svg>
<svg class="a" style="left:2721px;top:797px;" width="50" height="50" viewBox="0 0 50 50"><g fill="none" stroke="#8a8a8a"><circle cx="30" cy="20" r="15" stroke-width="3.4"/><path d="M19 31 L7 43" stroke-width="6"/></g></svg>
<svg class="a" style="left:2392px;top:1036px;" width="50" height="50" viewBox="0 0 50 50"><g fill="none" stroke="#111"><circle cx="30" cy="20" r="15" stroke-width="3.4"/><path d="M19 31 L7 43" stroke-width="6"/></g></svg>
<svg class="a" style="left:3259px;top:1035px;" width="50" height="50" viewBox="0 0 50 50"><g fill="none" stroke="#111"><circle cx="30" cy="20" r="15" stroke-width="3.4"/><path d="M19 31 L7 43" stroke-width="6"/></g></svg>
<svg class="a" style="left:2647px;top:1151px;" width="50" height="50" viewBox="0 0 50 50"><g fill="none" stroke="#111"><circle cx="30" cy="20" r="15" stroke-width="3.4"/><path d="M19 31 L7 43" stroke-width="6"/></g></svg>
<svg class="a" style="left:3262px;top:1151px;" width="50" height="50" viewBox="0 0 50 50"><g fill="none" stroke="#111"><circle cx="30" cy="20" r="15" stroke-width="3.4"/><path d="M19 31 L7 43" stroke-width="6"/></g></svg>
<svg class="a" style="left:3259px;top:1268px;" width="50" height="50" viewBox="0 0 50 50"><g fill="none" stroke="#111"><circle cx="30" cy="20" r="15" stroke-width="3.4"/><path d="M19 31 L7 43" stroke-width="6"/></g></svg>
<svg class="a" style="left:2090px;top:2085px;" width="340" height="80" viewBox="0 0 340 80"><g transform="scale(0.15083)"><g fill="none" stroke="#000" stroke-width="24"><path d="M90 345 V155 L140 100 H270 V170 M90 340 H192"/><path d="M128 207 H190 M128 249 H190 M128 292 H190" stroke-width="18"/><path d="M195 138 H240" stroke-width="16"/><rect x="228" y="228" width="150" height="175"/><path d="M260 297 H345 M260 340 H345" stroke-width="18"/></g><rect x="283" y="195" width="44" height="28"/><rect x="250" y="232" width="105" height="30"/><g fill="none" stroke="#000"><path d="M625 112 L585 152 V235 L780 430 H858 L925 362" stroke-width="22"/><path d="M700 200 L680 222 L790 336 L845 282" stroke-width="22"/><path d="M640 100 L712 178" stroke-width="46"/><path d="M842 282 L912 352" stroke-width="46"/><rect x="1208" y="100" width="150" height="82" stroke-width="26"/><path d="M1200 360 H1122 V228 L1160 188 H1420 L1450 218 V362 H1370" stroke-width="24"/><rect x="1208" y="325" width="150" height="103" stroke-width="26"/><path d="M2035 215 V182 L2072 140 H2190 V215" stroke-width="22"/><path d="M1968 252 H2238 M1967 252 V365 H2005 M2233 252 V365 H2215" stroke-width="22"/><path d="M2017 292 V385 H2208 V292 M2005 295 H2053 M2218 295 H2168 M2053 290 V340 H2168 V290" stroke-width="22"/></g><path d="M1620 240 H1777 L1697 330 Z" fill="#333"/></g></svg>
<svg class="a" style="left:1630px;top:2085px;" width="230" height="80" viewBox="0 0 230 80"><g transform="scale(0.102)"><g fill="none" stroke="#000" stroke-width="27"><path d="M889 612 V211 H935 M1068 211 H1380 V598 H889 M903 308 H1362"/><path d="M935 171 H1068 M935 241 H1068" /></g><path d="M1628 358 H1860 L1744 490 Z" fill="#2a2a2a"/></g></svg>
<svg class="a" style="left:1840px;top:2085px;" width="250" height="80" viewBox="0 0 250 80"><g transform="scale(0.1109)"><g fill="none" stroke="#000" stroke-width="27"><rect x="73" y="251" width="155" height="155"/><rect x="375" y="130" width="155" height="155"/><rect x="375" y="403" width="155" height="155"/><path d="M240 338 H316 M316 223 V495 M303 223 H362 M303 495 H362"/><path d="M1226 415 V225 H1256 V195 H1288 V131 H1471 V235"/><path d="M1362 220 H1425 M1272 283 H1425 M1272 343 H1392 M1272 403 H1362"/><path d="M1526 357 V270 H1556 V251 H1681 V586 H1488 M1425 343 H1526"/><path d="M1580 343 H1635 M1488 403 H1635 M1545 467 H1635 M1545 527 H1635"/></g><path d="M1245 452 H1400 V390 L1515 495 L1400 600 V540 H1245 Z" fill="#000"/><path d="M757 330 H970 L862 450 Z M1910 330 H2120 L2015 450 Z" fill="#2a2a2a"/></g></svg>
<svg class="a" style="left:2450px;top:2085px;" width="280" height="80" viewBox="0 0 280 80"><g transform="scale(0.12422)"><g fill="none" stroke="#000" stroke-width="27"><rect x="111" y="170" width="406" height="351"/><path d="M111 252 H517"/><path d="M1114 411 V185 H1147 V150 H1180 V116 H1328 V411 Z"/><path d="M1193 375 V251 H1262 V280 M1275 265 V295 M1193 308 H1262"/><path d="M1411 400 V345 M1494 400 V345 M1411 334 H1494"/><rect x="1384" y="442" width="132" height="82"/></g><g fill="#000"><rect x="178" y="103" width="80" height="107"/><rect x="370" y="103" width="80" height="107"/><rect x="178" y="320" width="55" height="55"/><rect x="288" y="320" width="55" height="55"/><rect x="395" y="320" width="55" height="55"/><rect x="178" y="400" width="55" height="55"/><rect x="288" y="400" width="55" height="55"/></g><path d="M720 292 H910 L815 400 Z" fill="#2a2a2a"/><g fill="none" stroke="#a2a2a2" stroke-width="27"><path d="M1737 480 V198 H1780 M1737 308 H1990 M1737 466 H1965"/><path d="M1780 171 H1885 M1780 224 H1885 M1897 198 V200"/><path d="M1954 265 V185 H1975 V158 H2111 V265"/><path d="M2034 370 V325 M2111 400 V325 M2048 308 H2097"/><rect x="2009" y="414" width="132" height="80"/></g><rect x="1940" y="158" width="50" height="52" fill="#a2a2a2"/></g></svg>
<div class="a" style="left:783px;top:2168px;width:2564px;height:88px;background:#333;"></div>
<div class="a t" style="left:818px;top:2188.83px;font-size:38px;line-height:38px;color:#fff;letter-spacing:0.859px;-webkit-text-stroke:0.50px #333333;">Salvar</div>
<div class="a t" style="left:979px;top:2188.83px;font-size:38px;line-height:38px;color:#fff;letter-spacing:-1.235px;-webkit-text-stroke:0.50px #333333;">Novo</div>
<div class="a t" style="left:1124px;top:2188.83px;font-size:38px;line-height:38px;color:#fff;letter-spacing:0.771px;-webkit-text-stroke:0.50px #333333;">Limpar</div>
<div class="a t" style="left:1306px;top:2188.83px;font-size:38px;line-height:38px;color:#fff;letter-spacing:0.396px;-webkit-text-stroke:0.50px #333333;">Restaurar</div>
<div class="a t" style="left:1530px;top:2188.83px;font-size:38px;line-height:38px;color:#fff;letter-spacing:-1.651px;-webkit-text-stroke:0.50px #333333;">Fechar</div>
<div class="a" style="left:1632px;top:2009px;width:67px;height:80px;background:#e5801c;border-radius:9px;"></div>
<div class="a" style="left:1613px;top:2072px;width:106px;height:106px;background:#e5801c;border-radius:9px;"></div>
<div class="a" style="left:1628px;top:2087px;width:76px;height:75px;background:#e3f0fb;"></div>
<div class="a t" style="left:1650px;top:2012.52px;font-size:62px;line-height:62px;color:#fff;font-weight:bold;">1</div>
<svg class="a" style="left:1630px;top:2085px;" width="230" height="80" viewBox="0 0 230 80"><g transform="scale(0.102)"><g fill="none" stroke="#000" stroke-width="27"><path d="M93 520 V228 H125 V195 H160 V141 H360 V320"/><path d="M93 504 H275"/><path d="M145 308 H275 M145 374 H275 M145 438 H275 M245 241 H310"/><circle cx="458" cy="505" r="133"/><path d="M375 504 H540 M457 425 V585" stroke-width="30"/></g></g></svg>
<div class="a" style="left:205px;top:2186px;width:1355px;height:69px;background:rgba(255,255,255,.975);box-shadow:6px 8px 8px rgba(0,0,0,.35);"></div>
<div class="a t" style="left:216px;top:2203.83px;font-size:38px;line-height:38px;color:#000;letter-spacing:0.611px;-webkit-text-stroke:0.50px #ffffff;">Abre a tela de emissão de documentos para a criação de novos expedientes</div>
</body></html>
